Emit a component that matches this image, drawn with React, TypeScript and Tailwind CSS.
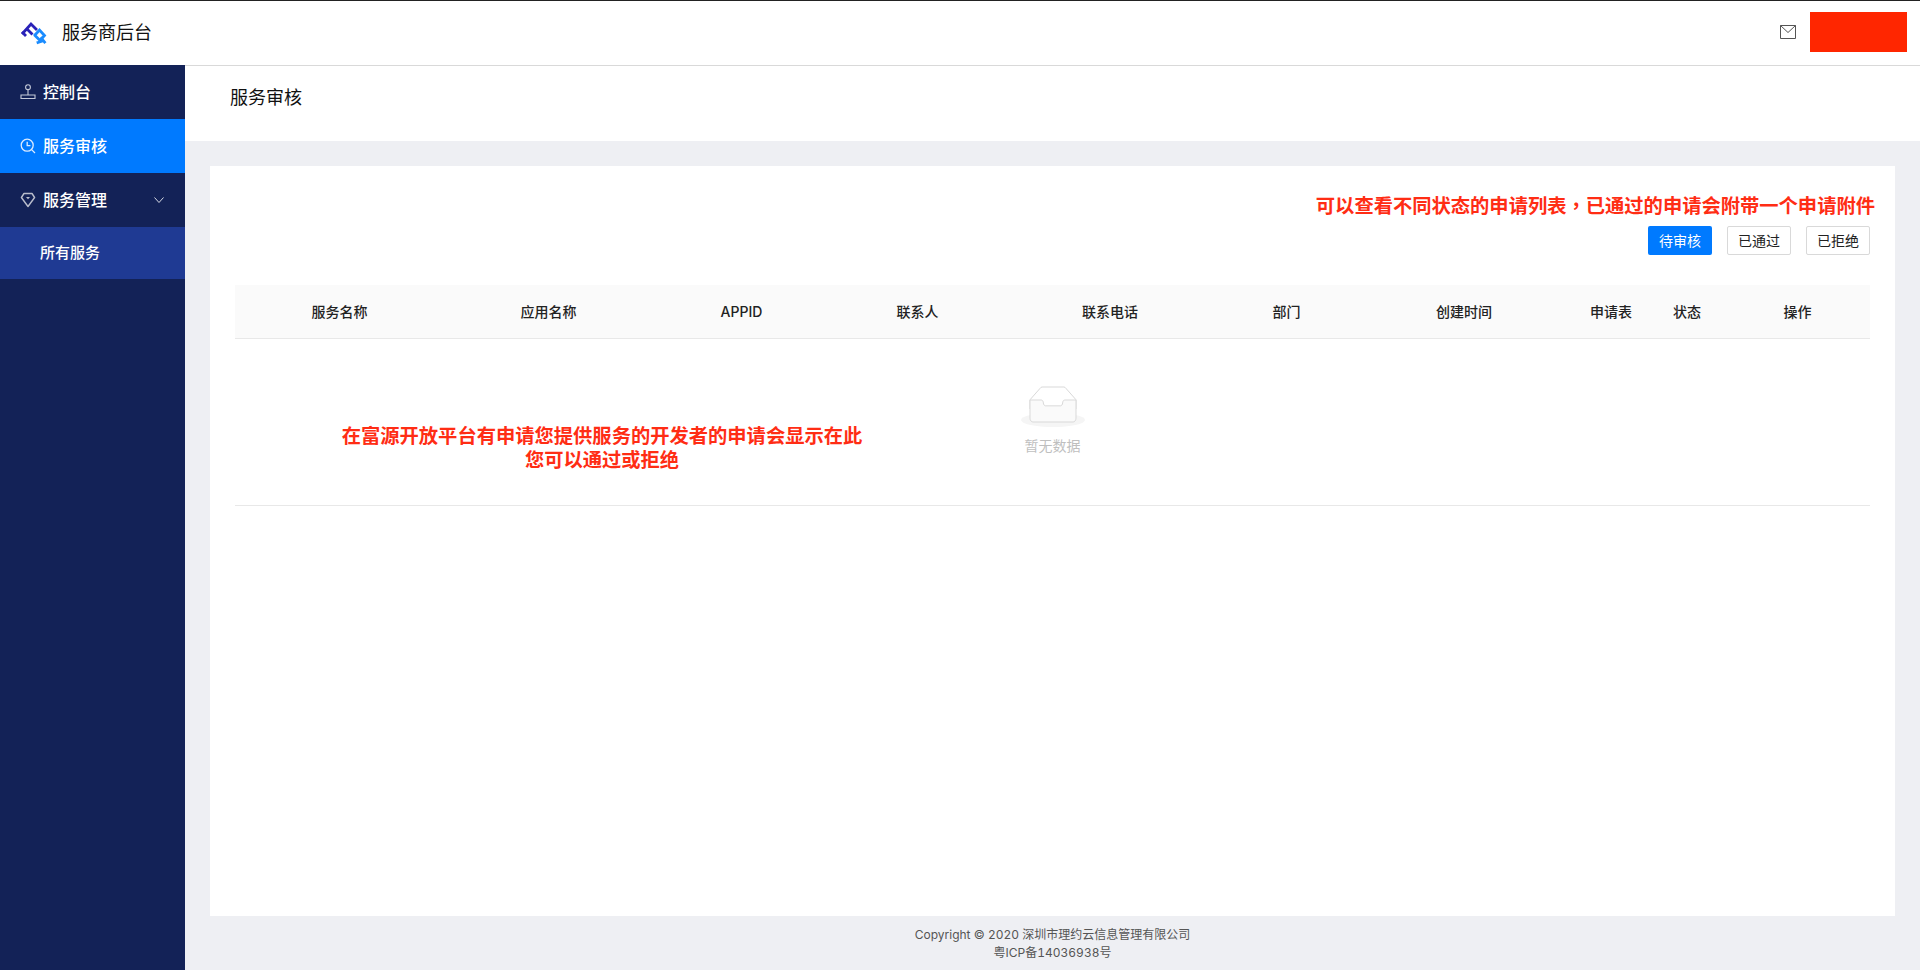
const font = "font-['PingFang_SC','Inter','Noto_Sans_CJK_SC',sans-serif]";

function Logo() {
  return (
    <svg width="27" height="24" viewBox="0 0 27 24" fill="none" strokeWidth="2.8" strokeLinecap="square" strokeLinejoin="miter">
      <path d="M3 12L11 3L16 8" stroke="#2a22b8" />
      <path d="M7.5 8.5L11.5 12.5" stroke="#2a22b8" />
      <path d="M3 12L5 14" stroke="#2a22b8" />
      <path d="M15 14L19.5 9L24.5 14.5L20 19.5L15.5 15" stroke="#1a8cff" />
      <path d="M21 20.5L18 21.5M21.5 17.5L24.5 21" stroke="#1a8cff" />
    </svg>
  );
}

function StampIcon() {
  return (
    <svg width="16" height="16" viewBox="0 0 16 16" fill="none" stroke="#c4c9d8" strokeWidth="1.1">
      <circle cx="8" cy="3.2" r="2.4" />
      <path d="M8 5.6V11" />
      <path d="M1 11H15V14.5H1Z" />
    </svg>
  );
}

function AuditIcon() {
  return (
    <svg width="16" height="16" viewBox="0 0 16 16" fill="none" stroke="#dcebff" strokeWidth="1.3">
      <circle cx="7.2" cy="7.2" r="6" />
      <path d="M7.2 3.8V7.6H10.4M11.6 11.6L15 15" />
    </svg>
  );
}

function GemIcon() {
  return (
    <svg width="16" height="16" viewBox="0 0 16 16" fill="none" stroke="#b9bdcc" strokeWidth="1.4">
      <path d="M4 1.5H12L14.6 5.5L8 14.5L1.4 5.5Z" strokeLinejoin="round" />
      <path d="M6 5H10L8 7.2Z" fill="#b9bdcc" stroke="none" />
    </svg>
  );
}

const columns: string[] = ["服务名称", "应用名称", "APPID", "联系人", "联系电话", "部门", "创建时间", "申请表", "状态", "操作"];

function NavItem({ icon, label, active, chevron }: { icon: React.ReactNode; label: string; active?: boolean; chevron?: boolean }) {
  return (
    <div className={`h-[54px] flex items-center pl-5 pr-[21px] text-white text-base font-medium ${active ? "bg-[#007aff]" : ""}`}>
      <span className="w-[23px] flex shrink-0">{icon}</span>
      <span className="flex-1">{label}</span>
      {chevron && (
        <svg width="10" height="6" viewBox="0 0 10 6" fill="none" stroke="#d6d9e4" strokeWidth="1">
          <path d="M0.5 0.5L5 5.5L9.5 0.5" />
        </svg>
      )}
    </div>
  );
}

export default function App() {
  return (
    <div className={`relative w-[1920px] h-[970px] overflow-hidden flex flex-col bg-[#eeeff3] ${font}`}>
      <header className="h-[66px] shrink-0 bg-white border-t border-t-[#222222] border-b border-b-[#d9d9d9] flex items-center pl-5 pr-[13px]">
        <Logo />
        <span className="ml-[15px] text-lg text-[#111111]">服务商后台</span>
        <div className="flex-1" />
        <svg className="mb-[2px]" width="16" height="14" viewBox="0 0 16 14" fill="none" stroke="#555555" strokeWidth="1">
          <path d="M0.5 0.5H15.5V13.5H0.5Z" />
          <path d="M0.5 0.5L8 7.5L15.5 0.5" />
        </svg>
        <div className="ml-[14px] mb-[2px] w-[97px] h-10 bg-[#ff2600]" />
      </header>
      <div className="flex-1 flex min-h-0">
        <aside className="w-[185px] shrink-0 bg-[#132257] -mt-px relative">
          <NavItem icon={<StampIcon />} label="控制台" />
          <NavItem icon={<AuditIcon />} label="服务审核" active />
          <NavItem icon={<GemIcon />} label="服务管理" chevron />
          <div className="h-[52px] bg-[#1f3a93] pl-10 pt-px flex items-center text-white text-[15px] font-medium">所有服务</div>
        </aside>
        <main className="flex-1 flex flex-col min-w-0">
          <div className="h-[75px] shrink-0 bg-white pl-[45px] pt-3 text-lg leading-[40px] text-[#111111]">服务审核</div>
          <div className="ml-[25px] mr-[25px] mt-[25px] h-[750px] bg-white px-[25px] relative">
            <div className="h-[51px] pt-[27px] text-right -mr-[5px] text-[19.3px] leading-[24px] font-bold text-[#ff2d14]">
              可以查看不同状态的申请列表<span className="font-['Noto_Sans_CJK_TC',sans-serif]">，</span>已通过的申请会附带一个申请附件
            </div>
            <div className="mt-[9px] flex justify-end gap-[15px]">
              <button className="w-16 h-[29px] rounded-xs bg-[#007aff] text-white text-sm">待审核</button>
              <button className="w-16 h-[29px] rounded-xs border border-[#d9d9d9] bg-white text-[#222222] text-sm">已通过</button>
              <button className="w-16 h-[29px] rounded-xs border border-[#d9d9d9] bg-white text-[#222222] text-sm">已拒绝</button>
            </div>
            <div className="mt-[30px] grid grid-cols-[209px_209px_177px_175px_210px_143px_212px_82px_70px_148px] h-[54px] bg-[#fafafa] border-b border-[#e8e8e8] items-center text-center text-sm font-medium text-[#222222]">
              {columns.map((c) => <div key={c} className="last:pl-[3px]">{c}</div>)}
            </div>
            <div className="h-[167px] border-b border-[#e8e8e8] flex flex-col items-center pt-[47px]">
              <svg width="64" height="41" viewBox="0 0 64 41">
                <g transform="translate(0 1)" fill="none" fillRule="evenodd">
                  <ellipse fill="#f5f5f5" cx="32" cy="33" rx="32" ry="7" />
                  <g fillRule="nonzero" stroke="#d9d9d9">
                    <path d="M55 12.76L44.854 1.258C44.367.474 43.656 0 42.907 0H21.093c-.749 0-1.46.474-1.947 1.257L9 12.761V22h46v-9.24z" />
                    <path d="M41.613 15.931c0-1.605.994-2.93 2.227-2.931H55v18.137C55 33.26 53.68 35 52.05 35h-40.1C10.32 35 9 33.259 9 31.137V13h11.16c1.233 0 2.227 1.323 2.227 2.928v.022c0 1.605 1.005 2.901 2.237 2.901h14.752c1.232 0 2.237-1.308 2.237-2.913v-.007z" fill="#fafafa" />
                  </g>
                </g>
              </svg>
              <div className="mt-[8px] text-sm leading-[22px] text-[#bfbfbf]">暂无数据</div>
            </div>
            <div className="absolute left-[131px] top-[258px] w-[522px] text-center text-[19.3px] leading-[24px] font-bold text-[#ff2d14]">
              在富源开放平台有申请您提供服务的开发者的申请会显示在此
              <br />
              您可以通过或拒绝
            </div>
          </div>
          <div className="mt-[10px] text-center text-xs leading-[18px] text-[#555555] tabular-nums">
            <div>Copyright © 2020 深圳市理约云信息管理有限公司</div>
            <div>粤ICP备14036938号</div>
          </div>
        </main>
      </div>
    </div>
  );
}
